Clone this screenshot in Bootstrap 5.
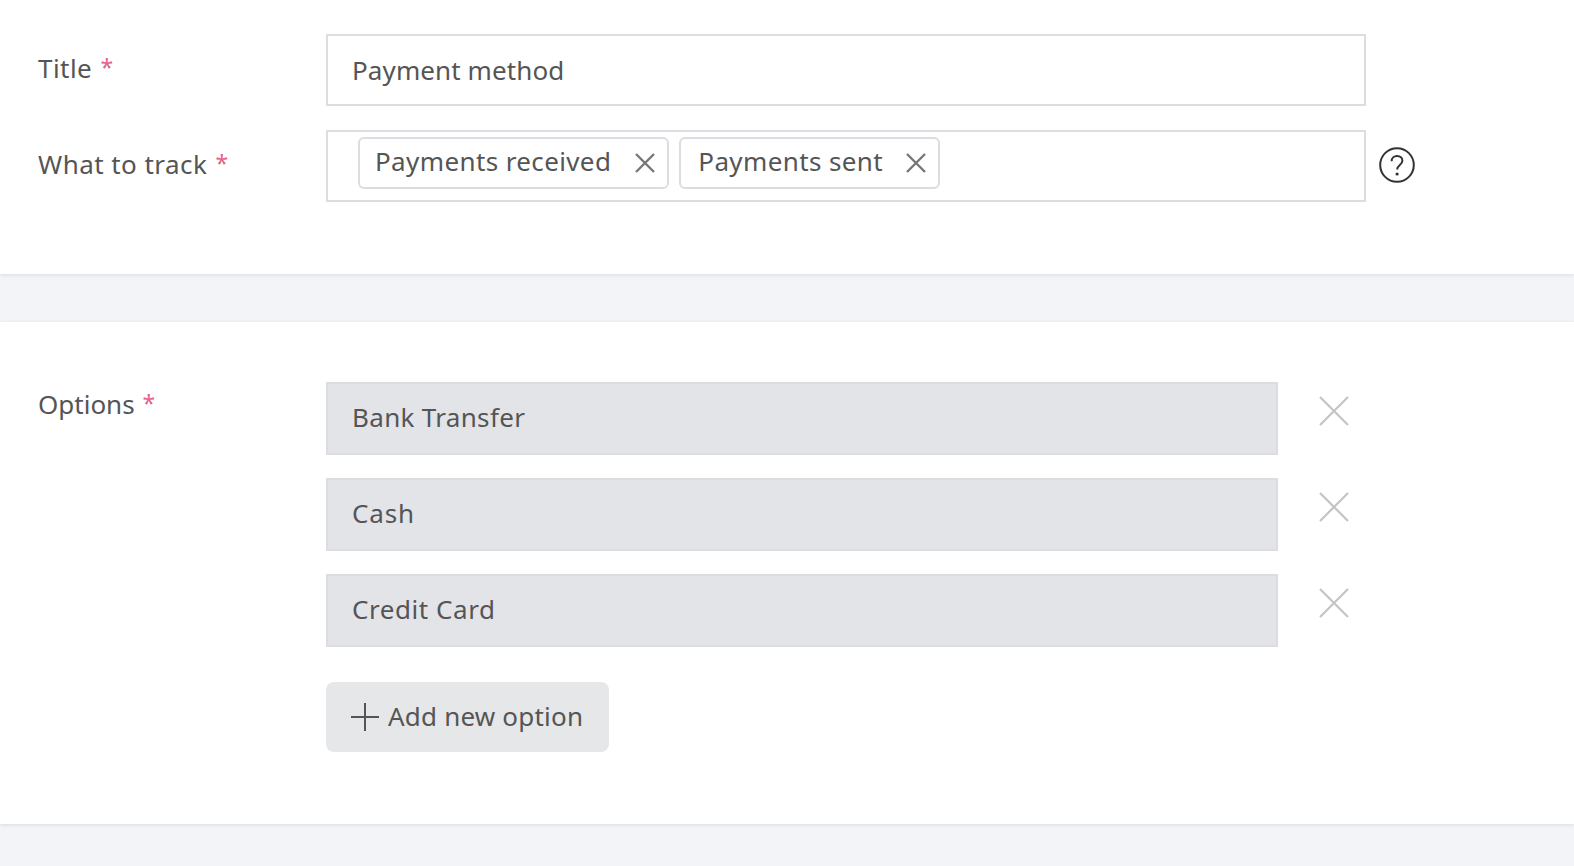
<!DOCTYPE html>
<html lang="en">
<head>
<meta charset="utf-8">
<title>Payment method</title>
<link href="https://cdn.jsdelivr.net/npm/bootstrap@5.3.0/dist/css/bootstrap.min.css" rel="stylesheet">
<style>
html,body{height:100%;}
body{background:#f2f4f7;font-family:"Noto Sans",sans-serif;color:#555;font-size:26px;letter-spacing:.32px;overflow:hidden;}
.sheet{background:#fff;padding-left:38px;}
.sheet-one{height:274px;padding-top:34px;box-shadow:0 1px 4px rgba(0,0,0,.1);}
.sheet-two{margin-top:48px;height:502px;padding-top:60px;box-shadow:0 1px 4px rgba(0,0,0,.1);}
.lbl{width:288px;flex:none;line-height:36px;padding-top:16px;letter-spacing:.45px;}
.lbl-top{padding-top:4px;letter-spacing:0;}
.star{color:#e4638a;font-size:23px;margin-left:1px;position:relative;top:-2px;}
.field{height:72px;border:2px solid #dcdde1;width:1040px;padding:0 24px;display:flex;align-items:center;line-height:1;}
.tight{letter-spacing:.1px;}
.wide{letter-spacing:.55px;}
.widest{letter-spacing:.85px;}
.field-muted{background:#e3e4e8;width:952px;height:72.5px;padding-bottom:3px;}
.chips{padding:5px 0 0 30px;gap:10px;align-items:flex-start;letter-spacing:.38px;}
.chip{height:52px;border:2px solid #dcdde1;border-radius:6px;display:flex;align-items:center;padding:0 10px 4px 15px;}
.chip svg{margin-top:4px;margin-left:22px;}
.chip-b{padding-left:17px;}
.chip-b svg{margin-left:21px;}
.rowgap{margin-bottom:24px;}
.rowgap-b{margin-bottom:23.5px;}
.icon-help{margin-left:13px;margin-top:17px;}
.del{margin-left:41px;margin-top:14px;flex:none;}
.addbtn{display:inline-flex;align-items:center;gap:9px;height:70px;width:283px;background:#e5e7e9;border:0;border-radius:8px;padding:0 0 1px 25px;color:#555;font-size:26px;letter-spacing:.2px;margin-top:12px;}
.addbtn svg{margin-top:1px;}
</style>
</head>
<body>
<section class="sheet sheet-one">
  <div class="d-flex rowgap">
    <div class="lbl">Title <span class="star">*</span></div>
    <div class="field tight">Payment method</div>
  </div>
  <div class="d-flex">
    <div class="lbl">What to track <span class="star">*</span></div>
    <div class="field chips">
      <span class="chip">Payments received<svg width="24" height="24" viewBox="0 0 24 24"><path d="M3 3 21 21M21 3 3 21" stroke="#777" stroke-width="2.4" fill="none"/></svg></span>
      <span class="chip chip-b">Payments sent<svg width="24" height="24" viewBox="0 0 24 24"><path d="M3 3 21 21M21 3 3 21" stroke="#777" stroke-width="2.4" fill="none"/></svg></span>
    </div>
    <svg class="icon-help" width="36" height="36" viewBox="0 0 36 36"><circle cx="18" cy="18" r="16.8" fill="none" stroke="#333" stroke-width="2"/><path d="M12.6 14.2c0-3.2 2.4-5.2 5.5-5.2s5.3 2 5.3 4.7c0 4.2-5.3 4.3-5.3 8.8" fill="none" stroke="#333" stroke-width="2"/><circle cx="18.1" cy="27" r="1.6" fill="#333"/></svg>
  </div>
</section>
<section class="sheet sheet-two d-flex">
  <div class="lbl lbl-top">Options <span class="star">*</span></div>
  <div>
    <div class="d-flex rowgap-b">
      <div class="field field-muted">Bank Transfer</div>
      <svg class="del" width="30" height="30" viewBox="0 0 30 30"><path d="M1 1 29 29M29 1 1 29" stroke="#c4c4c4" stroke-width="2.2" fill="none"/></svg>
    </div>
    <div class="d-flex rowgap-b">
      <div class="field field-muted widest">Cash</div>
      <svg class="del" width="30" height="30" viewBox="0 0 30 30"><path d="M1 1 29 29M29 1 1 29" stroke="#c4c4c4" stroke-width="2.2" fill="none"/></svg>
    </div>
    <div class="d-flex rowgap-b">
      <div class="field field-muted wide">Credit Card</div>
      <svg class="del" width="30" height="30" viewBox="0 0 30 30"><path d="M1 1 29 29M29 1 1 29" stroke="#c4c4c4" stroke-width="2.2" fill="none"/></svg>
    </div>
    <button type="button" class="addbtn"><svg width="28" height="28" viewBox="0 0 28 28"><path d="M0 14H28M14 0V28" stroke="#555" stroke-width="2" fill="none"/></svg>Add new option</button>
  </div>
</section>
</body>
</html>
